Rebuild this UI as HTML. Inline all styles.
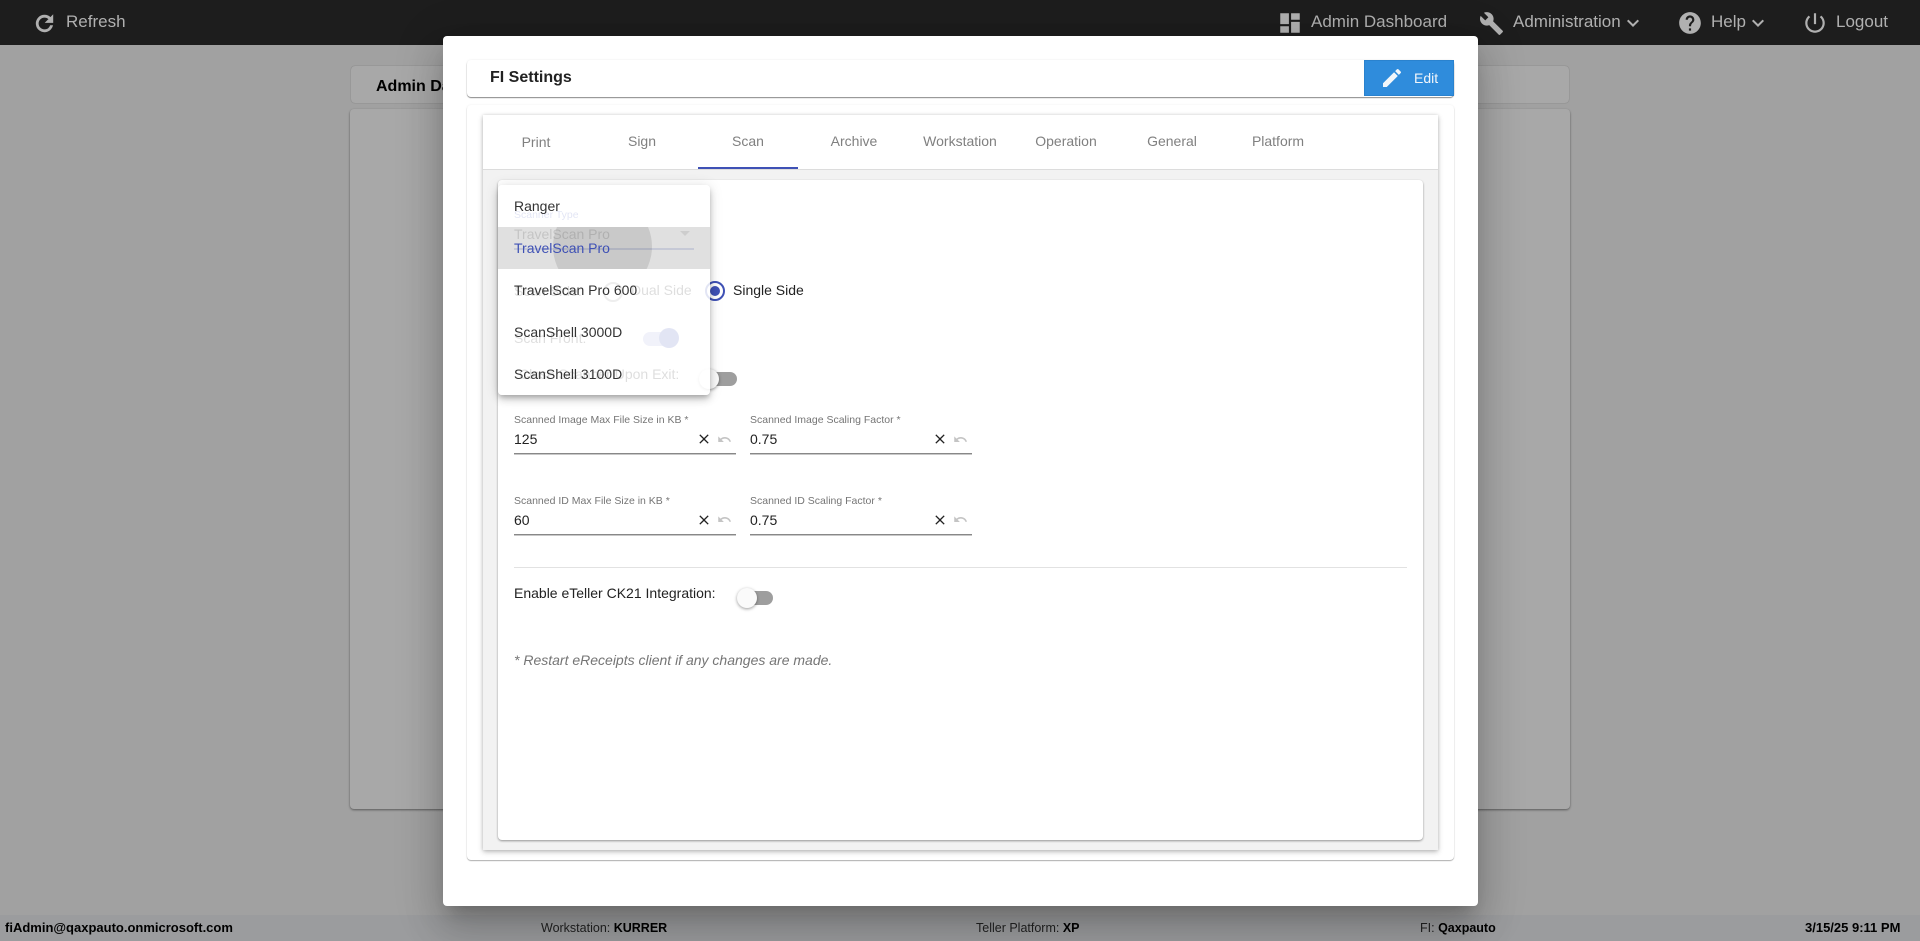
<!DOCTYPE html>
<html lang="en"><head><meta charset="utf-8"><title>FI Settings</title>
<style>
html,body{margin:0;padding:0;width:1920px;height:941px;overflow:hidden;background:#a1a1a1;font-family:"Liberation Sans",Arial,sans-serif}
.a{position:absolute}
.t{position:absolute;white-space:nowrap;line-height:20px;height:20px}
svg{position:absolute;display:block}
.hd{color:#b0b0b0;font-size:17px;top:12px}
.hi{fill:#b0b0b0}
.tab{position:absolute;top:131px;width:106px;text-align:center;font-size:14px;line-height:20px;color:#808080}
.lb{font-size:10.5px;color:#757575}
.val{font-size:14px;color:#222}
.line{position:absolute;height:1px;background:#888;box-shadow:0 1px 0 #c8c8c8}
.ft{font-size:12.5px;color:#222;top:918px}
.ft b{color:#000}
.mi{position:absolute;left:16px;font-size:14px;line-height:20px;color:#333;white-space:nowrap}
</style></head>
<body>
<!-- background -->
<div class="a" style="left:0;top:45px;width:1920px;height:871px;background:#a1a1a1"></div>
<div class="a" style="left:351px;top:66px;width:1218px;height:37px;background:#a8a8a8;border-radius:4px;box-shadow:0 0 1px rgba(0,0,0,.35)"></div>
<div class="t" style="left:376px;top:77px;font-size:16px;font-weight:bold;color:#000">Admin Dashboard</div>
<div class="a" style="left:350px;top:109px;width:1220px;height:700px;background:#a8a8a8;border-radius:4px;box-shadow:0 1px 2px rgba(0,0,0,.45)"></div>
<!-- footer -->
<div class="a" style="left:0;top:915px;width:1920px;height:26px;background:#9b9c9e"></div>
<div class="t ft" style="left:5px;font-weight:bold;color:#000;font-size:13px">fiAdmin@qaxpauto.onmicrosoft.com</div>
<div class="t ft" style="left:541px">Workstation: <b>KURRER</b></div>
<div class="t ft" style="left:976px">Teller Platform: <b>XP</b></div>
<div class="t ft" style="left:1420px">FI: <b>Qaxpauto</b></div>
<div class="t ft" style="left:1805px;font-weight:bold;color:#000;font-size:13px">3/15/25 9:11 PM</div>
<!-- header -->
<div class="a" style="left:0;top:0;width:1920px;height:45px;background:#1d1d1d"></div>
<svg class="hi" style="left:32px;top:11px;stroke:#b0b0b0;stroke-width:.7" width="25" height="25" viewBox="0 0 24 24"><path d="M17.65 6.35C16.2 4.9 14.21 4 12 4c-4.42 0-7.99 3.58-7.99 8s3.57 8 7.99 8c3.73 0 6.84-2.55 7.73-6h-2.08c-.82 2.33-3.04 4-5.65 4-3.31 0-6-2.69-6-6s2.69-6 6-6c1.66 0 3.14.69 4.22 1.78L13 11h7V4l-2.35 2.35z"/></svg>
<div class="t hd" style="left:66px">Refresh</div>
<svg class="hi" style="left:1277px;top:10px" width="26" height="26" viewBox="0 0 24 24"><path d="M3 13h8V3H3v10zm0 8h8v-6H3v6zm10 0h8V11h-8v10zm0-18v6h8V3h-8z"/></svg>
<div class="t hd" style="left:1311px">Admin Dashboard</div>
<svg class="hi" style="left:1479px;top:11px" width="25" height="25" viewBox="0 0 24 24"><path d="M22.7 19l-9.1-9.1c.9-2.3.4-5-1.5-6.9-2-2-5-2.4-7.4-1.3L9 6 6 9 1.6 4.7C.4 7.1.9 10.1 2.9 12.1c1.9 1.9 4.6 2.4 6.9 1.5l9.1 9.1c.4.4 1 .4 1.4 0l2.3-2.3c.5-.4.5-1.1.1-1.4z"/></svg>
<div class="t hd" style="left:1513px">Administration</div>
<svg class="hi" style="left:1621px;top:11px" width="24" height="24" viewBox="0 0 24 24"><path d="M7.41 8.59L12 13.17l4.59-4.58L18 10l-6 6-6-6 1.41-1.41z"/></svg>
<svg class="hi" style="left:1677px;top:10px" width="26" height="26" viewBox="0 0 24 24"><path d="M12 2C6.48 2 2 6.48 2 12s4.48 10 10 10 10-4.48 10-10S17.52 2 12 2zm1 17h-2v-2h2v2zm2.07-7.75l-.9.92C13.45 12.9 13 13.5 13 15h-2v-.5c0-1.1.45-2.1 1.17-2.83l1.24-1.26c.37-.36.59-.86.59-1.41 0-1.1-.9-2-2-2s-2 .9-2 2H8c0-2.21 1.79-4 4-4s4 1.79 4 4c0 .88-.36 1.68-.93 2.25z"/></svg>
<div class="t hd" style="left:1711px">Help</div>
<svg class="hi" style="left:1746px;top:11px" width="24" height="24" viewBox="0 0 24 24"><path d="M7.41 8.59L12 13.17l4.59-4.58L18 10l-6 6-6-6 1.41-1.41z"/></svg>
<svg class="hi" style="left:1802px;top:10px" width="26" height="26" viewBox="0 0 24 24"><path d="M13 3h-2v10h2V3zm4.83 2.17l-1.42 1.42C17.99 7.86 19 9.81 19 12c0 3.87-3.13 7-7 7s-7-3.13-7-7c0-2.19 1.01-4.14 2.58-5.42L6.17 5.17C4.23 6.82 3 9.26 3 12c0 4.97 4.03 9 9 9s9-4.03 9-9c0-2.74-1.23-5.18-3.17-6.83z"/></svg>
<div class="t hd" style="left:1836px">Logout</div>
<!-- modal -->
<div class="a" style="left:443px;top:36px;width:1035px;height:870px;background:#fff;border-radius:4px;box-shadow:0 11px 15px -7px rgba(0,0,0,.2),0 24px 38px 3px rgba(0,0,0,.14),0 9px 46px 8px rgba(0,0,0,.12)"></div>
<!-- title card -->
<div class="a" style="left:467px;top:60px;width:987px;height:37px;background:#fff;border-radius:4px;box-shadow:0 1px 1px rgba(0,0,0,.45),0 0 2px rgba(0,0,0,.08)"></div>
<div class="t" style="left:490px;top:68px;font-size:16px;font-weight:bold;color:#222">FI Settings</div>
<div class="a" style="left:1364px;top:60px;width:90px;height:36px;background:#2f8cdc;box-shadow:inset 0 0 0 1px #2a82ce"></div>
<svg style="left:1380px;top:66px;fill:#f2f6fa" width="24" height="24" viewBox="0 0 24 24"><path d="M3 17.25V21h3.75L17.81 9.94l-3.75-3.75L3 17.25zM20.71 7.04c.39-.39.39-1.02 0-1.41l-2.34-2.34c-.39-.39-1.02-.39-1.41 0l-1.83 1.83 3.75 3.75 1.83-1.83z"/></svg>
<div class="t" style="left:1414px;top:68px;font-size:14px;color:#f2f6fa">Edit</div>
<!-- outer card -->
<div class="a" style="left:467px;top:105px;width:987px;height:755px;background:#fff;border-radius:4px;box-shadow:0 1px 1px rgba(0,0,0,.3),0 0 2px rgba(0,0,0,.07)"></div>
<!-- tab panel -->
<div class="a" style="left:483px;top:115px;width:955px;height:735px;background:#f2f2f2;box-shadow:0 2px 5px rgba(0,0,0,.25),0 0 3px rgba(0,0,0,.12)"></div>
<div class="a" style="left:483px;top:115px;width:955px;height:54px;background:#fff;border-bottom:1px solid #dcdcdc"></div>
<div class="tab" style="left:483px;top:132px">Print</div>
<div class="tab" style="left:589px">Sign</div>
<div class="tab" style="left:695px">Scan</div>
<div class="tab" style="left:801px">Archive</div>
<div class="tab" style="left:907px">Workstation</div>
<div class="tab" style="left:1013px">Operation</div>
<div class="tab" style="left:1119px">General</div>
<div class="tab" style="left:1225px">Platform</div>
<div class="a" style="left:698px;top:167px;width:100px;height:2px;background:#3f51b5"></div>
<!-- content -->
<div class="a" style="left:498px;top:180px;width:925px;height:660px;background:#fff;border-radius:4px;box-shadow:0 1px 2px rgba(0,0,0,.4)"></div>
<!-- form behind the menu -->
<div class="t lb" style="left:514px;top:205px;color:#3f51b5">Scanner Type</div>
<div class="t val" style="left:514px;top:224px;color:#333">TravelScan Pro</div>
<div class="a" style="left:514px;top:248px;width:180px;height:2px;background:#3f51b5"></div>
<div class="a" style="left:680px;top:231px;width:0;height:0;border-left:5px solid transparent;border-right:5px solid transparent;border-top:5px solid #757575"></div>
<div class="t val" style="left:514px;top:281px">Scan Side:</div>
<div class="a" style="left:603px;top:282px;width:16px;height:16px;border:2px solid #8a8a8a;border-radius:50%"></div>
<div class="t val" style="left:631px;top:280px">Dual Side</div>
<div class="a" style="left:705px;top:281px;width:16px;height:16px;border:2px solid #3f51b5;border-radius:50%"></div>
<div class="a" style="left:710px;top:286px;width:10px;height:10px;background:#3f51b5;border-radius:50%"></div>
<div class="t val" style="left:733px;top:280px">Single Side</div>
<div class="t val" style="left:514px;top:328px">Scan Front:</div>
<div class="a" style="left:643px;top:332px;width:34px;height:14px;border-radius:7px;background:#9fa8da"></div>
<div class="a" style="left:659px;top:328px;width:20px;height:20px;border-radius:50%;background:#3f51b5"></div>
<div class="t val" style="left:519px;top:364px">Close Scanner Upon Exit:</div>
<div class="a" style="left:703px;top:372px;width:34px;height:14px;border-radius:7px;background:#9e9e9e"></div>
<div class="a" style="left:699px;top:369px;width:20px;height:20px;border-radius:50%;background:#fafafa;box-shadow:0 1px 3px rgba(0,0,0,.4)"></div>
<!-- fields -->
<div class="t lb" style="left:514px;top:410px">Scanned Image Max File Size in KB *</div>
<div class="t val" style="left:514px;top:429px">125</div>
<div class="line" style="left:514px;top:453px;width:222px"></div>
<div class="t lb" style="left:750px;top:410px">Scanned Image Scaling Factor *</div>
<div class="t val" style="left:750px;top:429px">0.75</div>
<div class="line" style="left:750px;top:453px;width:222px"></div>
<div class="t lb" style="left:514px;top:491px">Scanned ID Max File Size in KB *</div>
<div class="t val" style="left:514px;top:510px">60</div>
<div class="line" style="left:514px;top:534px;width:222px"></div>
<div class="t lb" style="left:750px;top:491px">Scanned ID Scaling Factor *</div>
<div class="t val" style="left:750px;top:510px">0.75</div>
<div class="line" style="left:750px;top:534px;width:222px"></div>
<svg style="left:696px;top:431px;fill:#222" width="16" height="16" viewBox="0 0 24 24"><path d="M19 6.41L17.59 5 12 10.59 6.41 5 5 6.41 10.59 12 5 17.59 6.41 19 12 13.41 17.59 19 19 17.59 13.41 12z"/></svg>
<svg style="left:717px;top:432px;fill:#c4c4c4" width="15" height="15" viewBox="0 0 24 24"><path d="M12.5 8c-2.65 0-5.05.99-6.9 2.6L2 7v9h9l-3.62-3.62c1.39-1.16 3.16-1.88 5.12-1.88 3.54 0 6.55 2.31 7.6 5.5l2.37-.78C21.08 11.03 17.15 8 12.5 8z"/></svg>
<svg style="left:932px;top:431px;fill:#222" width="16" height="16" viewBox="0 0 24 24"><path d="M19 6.41L17.59 5 12 10.59 6.41 5 5 6.41 10.59 12 5 17.59 6.41 19 12 13.41 17.59 19 19 17.59 13.41 12z"/></svg>
<svg style="left:953px;top:432px;fill:#c4c4c4" width="15" height="15" viewBox="0 0 24 24"><path d="M12.5 8c-2.65 0-5.05.99-6.9 2.6L2 7v9h9l-3.62-3.62c1.39-1.16 3.16-1.88 5.12-1.88 3.54 0 6.55 2.31 7.6 5.5l2.37-.78C21.08 11.03 17.15 8 12.5 8z"/></svg>
<svg style="left:696px;top:512px;fill:#222" width="16" height="16" viewBox="0 0 24 24"><path d="M19 6.41L17.59 5 12 10.59 6.41 5 5 6.41 10.59 12 5 17.59 6.41 19 12 13.41 17.59 19 19 17.59 13.41 12z"/></svg>
<svg style="left:717px;top:512px;fill:#c4c4c4" width="15" height="15" viewBox="0 0 24 24"><path d="M12.5 8c-2.65 0-5.05.99-6.9 2.6L2 7v9h9l-3.62-3.62c1.39-1.16 3.16-1.88 5.12-1.88 3.54 0 6.55 2.31 7.6 5.5l2.37-.78C21.08 11.03 17.15 8 12.5 8z"/></svg>
<svg style="left:932px;top:512px;fill:#222" width="16" height="16" viewBox="0 0 24 24"><path d="M19 6.41L17.59 5 12 10.59 6.41 5 5 6.41 10.59 12 5 17.59 6.41 19 12 13.41 17.59 19 19 17.59 13.41 12z"/></svg>
<svg style="left:953px;top:512px;fill:#c4c4c4" width="15" height="15" viewBox="0 0 24 24"><path d="M12.5 8c-2.65 0-5.05.99-6.9 2.6L2 7v9h9l-3.62-3.62c1.39-1.16 3.16-1.88 5.12-1.88 3.54 0 6.55 2.31 7.6 5.5l2.37-.78C21.08 11.03 17.15 8 12.5 8z"/></svg>
<div class="a" style="left:514px;top:567px;width:893px;height:1px;background:#e2e2e2"></div>
<div class="t val" style="left:514px;top:583px">Enable eTeller CK21 Integration:</div>
<div class="a" style="left:739px;top:591px;width:34px;height:14px;border-radius:7px;background:#9e9e9e"></div>
<div class="a" style="left:737px;top:588px;width:20px;height:20px;border-radius:50%;background:#fafafa;box-shadow:0 1px 3px rgba(0,0,0,.4)"></div>
<div class="t" style="left:514px;top:650px;font-size:14px;font-style:italic;color:#757575">* Restart eReceipts client if any changes are made.</div>
<!-- dropdown menu -->
<div class="a" style="left:498px;top:185px;width:212px;height:210px;background:rgba(255,255,255,.85);border-radius:4px;box-shadow:0 3px 5px -1px rgba(0,0,0,.2),0 5px 8px rgba(0,0,0,.14),0 1px 14px rgba(0,0,0,.12);overflow:hidden">
  <div class="a" style="left:0;top:42px;width:212px;height:42px;background:rgba(0,0,0,.12);overflow:hidden">
    <div class="a" style="left:55px;top:-30px;width:99px;height:99px;border-radius:50%;background:rgba(0,0,0,.1)"></div>
  </div>
  <div class="mi" style="top:11px">Ranger</div>
  <div class="mi" style="top:53px;color:#3f51b5">TravelScan Pro</div>
  <div class="mi" style="top:95px">TravelScan Pro 600</div>
  <div class="mi" style="top:137px">ScanShell 3000D</div>
  <div class="mi" style="top:179px">ScanShell 3100D</div>
</div>
</body></html>
